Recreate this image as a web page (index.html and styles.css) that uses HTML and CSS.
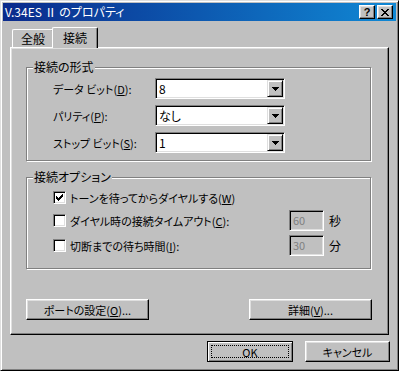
FILE: index.html
```html
<!DOCTYPE html>
<html lang="ja">
<head>
    <meta charset="UTF-8">
    <title>V.34ES Ⅱ のプロパティ</title>
    <link rel="stylesheet" href="styles.css">
</head>
<body>
    <div class="window">
        <!-- Barra de título -->
        <div class="titlebar">
            <span class="title">V.34ES Ⅱ のプロパティ</span>
            <div class="caption-buttons">
                <div class="cap-btn cap-help">?</div>
                <div class="cap-btn">
                    <svg width="8" height="7" viewBox="0 0 8 7" shape-rendering="crispEdges">
                        <path d="M0 0h2v1H0zM6 0h2v1H6zM1 1h2v1H1zM5 1h2v1H5zM2 2h4v1H2zM3 3h2v1H3zM2 4h4v1H2zM1 5h2v1H1zM5 5h2v1H5zM0 6h2v1H0zM6 6h2v1H6z" fill="#000"/>
                    </svg>
                </div>
            </div>
        </div>

        <div class="dialog">
            <div class="tabs">
                <div class="tab">全般</div>
                <div class="tab tab-active">接続</div>
            </div>

            <div class="panel">
                <!-- 接続の形式 -->
                <div class="group group-format">
                    <div class="group-title">接続の形式</div>
                    <div class="field-rows">
                        <div class="field-row">
                            <span class="field-label">データ ビット(<u>D</u>):</span>
                            <div class="combo">
                                <span class="combo-value">8</span>
                                <div class="combo-btn">
                                    <svg width="7" height="4" viewBox="0 0 7 4" shape-rendering="crispEdges"><path d="M0 0h7v1H0zM1 1h5v1H1zM2 2h3v1H2zM3 3h1v1H3z" fill="#000"/></svg>
                                </div>
                            </div>
                        </div>
                        <div class="field-row">
                            <span class="field-label">パリティ(<u>P</u>):</span>
                            <div class="combo">
                                <span class="combo-value">なし</span>
                                <div class="combo-btn">
                                    <svg width="7" height="4" viewBox="0 0 7 4" shape-rendering="crispEdges"><path d="M0 0h7v1H0zM1 1h5v1H1zM2 2h3v1H2zM3 3h1v1H3z" fill="#000"/></svg>
                                </div>
                            </div>
                        </div>
                        <div class="field-row">
                            <span class="field-label">ストップ ビット(<u>S</u>):</span>
                            <div class="combo">
                                <span class="combo-value">1</span>
                                <div class="combo-btn">
                                    <svg width="7" height="4" viewBox="0 0 7 4" shape-rendering="crispEdges"><path d="M0 0h7v1H0zM1 1h5v1H1zM2 2h3v1H2zM3 3h1v1H3z" fill="#000"/></svg>
                                </div>
                            </div>
                        </div>
                    </div>
                </div>

                <!-- 接続オプション -->
                <div class="group group-options">
                    <div class="group-title">接続オプション</div>
                    <div class="option-rows">
                        <div class="option-row option-short">
                            <div class="checkbox">
                                <svg width="7" height="7" viewBox="0 0 7 7" shape-rendering="crispEdges"><path d="M6 0h1v1H6zM5 1h2v1H5zM0 2h1v1H0zM4 2h3v1H4zM0 3h2v1H0zM3 3h3v1H3zM0 4h5v1H0zM1 5h3v1H1zM2 6h1v1H2z" fill="#000"/></svg>
                            </div>
                            <span class="option-text">トーンを待ってからダイヤルする(<u>W</u>)</span>
                        </div>
                        <div class="option-row">
                            <div class="checkbox"></div>
                            <span class="option-text option-fixed">ダイヤル時の接続タイムアウト(<u>C</u>):</span>
                            <div class="textbox">60</div>
                            <span class="unit">秒</span>
                        </div>
                        <div class="option-row">
                            <div class="checkbox"></div>
                            <span class="option-text option-fixed">切断までの待ち時間(<u>I</u>):</span>
                            <div class="textbox">30</div>
                            <span class="unit">分</span>
                        </div>
                    </div>
                </div>

                <div class="panel-buttons">
                    <div class="btn btn-wide">ポートの設定(<u>O</u>)...</div>
                    <div class="btn btn-wide">詳細(<u>V</u>)...</div>
                </div>
            </div>

            <div class="dialog-buttons">
                <div class="btn btn-default btn-ok"><span class="focus-rect">OK</span></div>
                <div class="btn btn-cancel">キャンセル</div>
            </div>
        </div>
    </div>
</body>
</html>
```

FILE: styles.css
```css
body {
    margin: 0;
    overflow: hidden;
    background: #c0c0c0;
    font-family: "Noto Sans CJK JP", "Noto Sans", sans-serif;
    font-size: 11px;
    font-feature-settings: "palt";
    color: #000;
}

u {
    text-underline-offset: 1px;
}

/* Ventana */
.window {
    width: 399px;
    height: 371px;
    box-sizing: border-box;
    padding: 2px;
    background: #c0c0c0;
    border: 1px solid;
    border-color: #dfdfdf #000 #000 #dfdfdf;
    box-shadow: inset 1px 1px #fff, inset -1px -1px #808080;
}

.titlebar {
    height: 18px;
    display: flex;
    align-items: center;
    justify-content: space-between;
    padding-left: 2px;
    background: linear-gradient(90deg, #0a2a8c, #1088d4);
    color: #fff;
}

.title {
    font-size: 12px;
    line-height: 18px;
    white-space: nowrap;
}

.caption-buttons {
    display: flex;
    gap: 2px;
    margin-right: 3px;
}

.cap-btn {
    width: 16px;
    height: 14px;
    box-sizing: border-box;
    display: flex;
    align-items: center;
    justify-content: center;
    background: #c0c0c0;
    border: 1px solid;
    border-color: #fff #000 #000 #fff;
    box-shadow: inset -1px -1px #808080, inset 1px 1px #dfdfdf;
}

.cap-help {
    color: #000;
    font-family: "Liberation Sans", sans-serif;
    font-weight: bold;
    font-size: 11px;
    line-height: 12px;
}

/* Cuadro de diálogo */
.dialog {
    padding: 6px 0 0 7px;
}

.tabs {
    display: flex;
    align-items: flex-end;
    height: 20px;
    padding-left: 2px;
    position: relative;
    z-index: 1;
    font-size: 12px;
}

.tab {
    width: 42px;
    height: 18px;
    box-sizing: border-box;
    display: flex;
    align-items: center;
    justify-content: center;
    background: #c0c0c0;
    border-top: 1px solid #fff;
    border-left: 1px solid #fff;
    border-right: 1px solid #000;
    border-radius: 2px 2px 0 0;
    box-shadow: inset -1px 0 #808080;
}

.tab-active {
    width: 46px;
    height: 21px;
    margin-left: -2px;
    margin-bottom: -1px;
    padding-bottom: 2px;
}

.panel {
    width: 379px;
    height: 288px;
    box-sizing: border-box;
    padding: 19px 0 0 15px;
    border: 1px solid;
    border-color: #fff #000 #000 #fff;
    box-shadow: inset -1px -1px #808080, inset 1px 1px #dfdfdf;
}

/* Grupos */
.group {
    width: 345px;
    box-sizing: border-box;
    border: 1px solid #808080;
    box-shadow: inset 1px 1px #fff, 1px 1px #fff;
}

.group-title {
    width: fit-content;
    height: 14px;
    line-height: 14px;
    margin: -8px 0 0 6px;
    padding: 0 1px;
    background: #c0c0c0;
    font-size: 12px;
}

.group-format {
    padding-bottom: 7px;
}

.field-rows {
    display: flex;
    flex-direction: column;
    gap: 6px;
    margin-top: 4px;
    padding-left: 26px;
}

.field-row {
    display: flex;
    align-items: center;
    height: 21px;
}

.field-label {
    width: 102px;
    white-space: nowrap;
}

.combo {
    width: 130px;
    height: 21px;
    box-sizing: border-box;
    display: flex;
    padding: 1px;
    background: #fff;
    border: 1px solid;
    border-color: #808080 #fff #fff #808080;
    box-shadow: inset 1px 1px #000, inset -1px -1px #dfdfdf;
}

.combo-value {
    flex: 1;
    padding-left: 2px;
    line-height: 17px;
    font-size: 12px;
}

.combo-btn {
    width: 16px;
    height: 17px;
    box-sizing: border-box;
    display: flex;
    align-items: center;
    justify-content: center;
    background: #c0c0c0;
    border: 1px solid;
    border-color: #dfdfdf #000 #000 #dfdfdf;
    box-shadow: inset 1px 1px #fff, inset -1px -1px #808080;
}

.group-options {
    margin-top: 16px;
    padding-bottom: 12px;
}

.option-rows {
    display: flex;
    flex-direction: column;
    gap: 4px;
    margin-top: 5px;
    padding-left: 26px;
}

.option-row {
    display: flex;
    align-items: center;
    height: 21px;
}

.option-short {
    height: 17px;
}

.checkbox {
    width: 13px;
    height: 13px;
    box-sizing: border-box;
    display: flex;
    align-items: center;
    justify-content: center;
    margin-right: 4px;
    background: #fff;
    border: 1px solid;
    border-color: #808080 #fff #fff #808080;
    box-shadow: inset 1px 1px #000, inset -1px -1px #dfdfdf;
}

.option-text {
    white-space: nowrap;
}

.option-fixed {
    width: 219px;
}

.textbox {
    width: 35px;
    height: 21px;
    box-sizing: border-box;
    padding: 1px 0 0 3px;
    line-height: 17px;
    color: #808080;
    background: #c0c0c0;
    border: 1px solid;
    border-color: #808080 #fff #fff #808080;
    box-shadow: inset 1px 1px #000, inset -1px -1px #dfdfdf;
}

.unit {
    margin-left: 5px;
    font-size: 12px;
}

/* Botones */
.btn {
    height: 21px;
    box-sizing: border-box;
    display: flex;
    align-items: center;
    justify-content: center;
    background: #c0c0c0;
    border: 1px solid;
    border-color: #fff #000 #000 #fff;
    box-shadow: inset -1px -1px #808080, inset 1px 1px #dfdfdf;
    white-space: nowrap;
}

.panel-buttons {
    display: flex;
    justify-content: space-between;
    width: 346px;
    margin-top: 30px;
}

.btn-wide {
    width: 123px;
}

.dialog-buttons {
    display: flex;
    justify-content: flex-end;
    gap: 12px;
    margin-top: 6px;
    padding-right: 6px;
}

.btn-ok {
    width: 86px;
}

.btn-cancel {
    width: 85px;
}

.btn-default {
    border-color: #000;
    box-shadow: inset 1px 1px #fff, inset -1px -1px #808080;
    padding: 3px;
}

.focus-rect {
    flex: 1;
    align-self: stretch;
    display: flex;
    align-items: center;
    justify-content: center;
    border: 1px dotted #000;
}
```
